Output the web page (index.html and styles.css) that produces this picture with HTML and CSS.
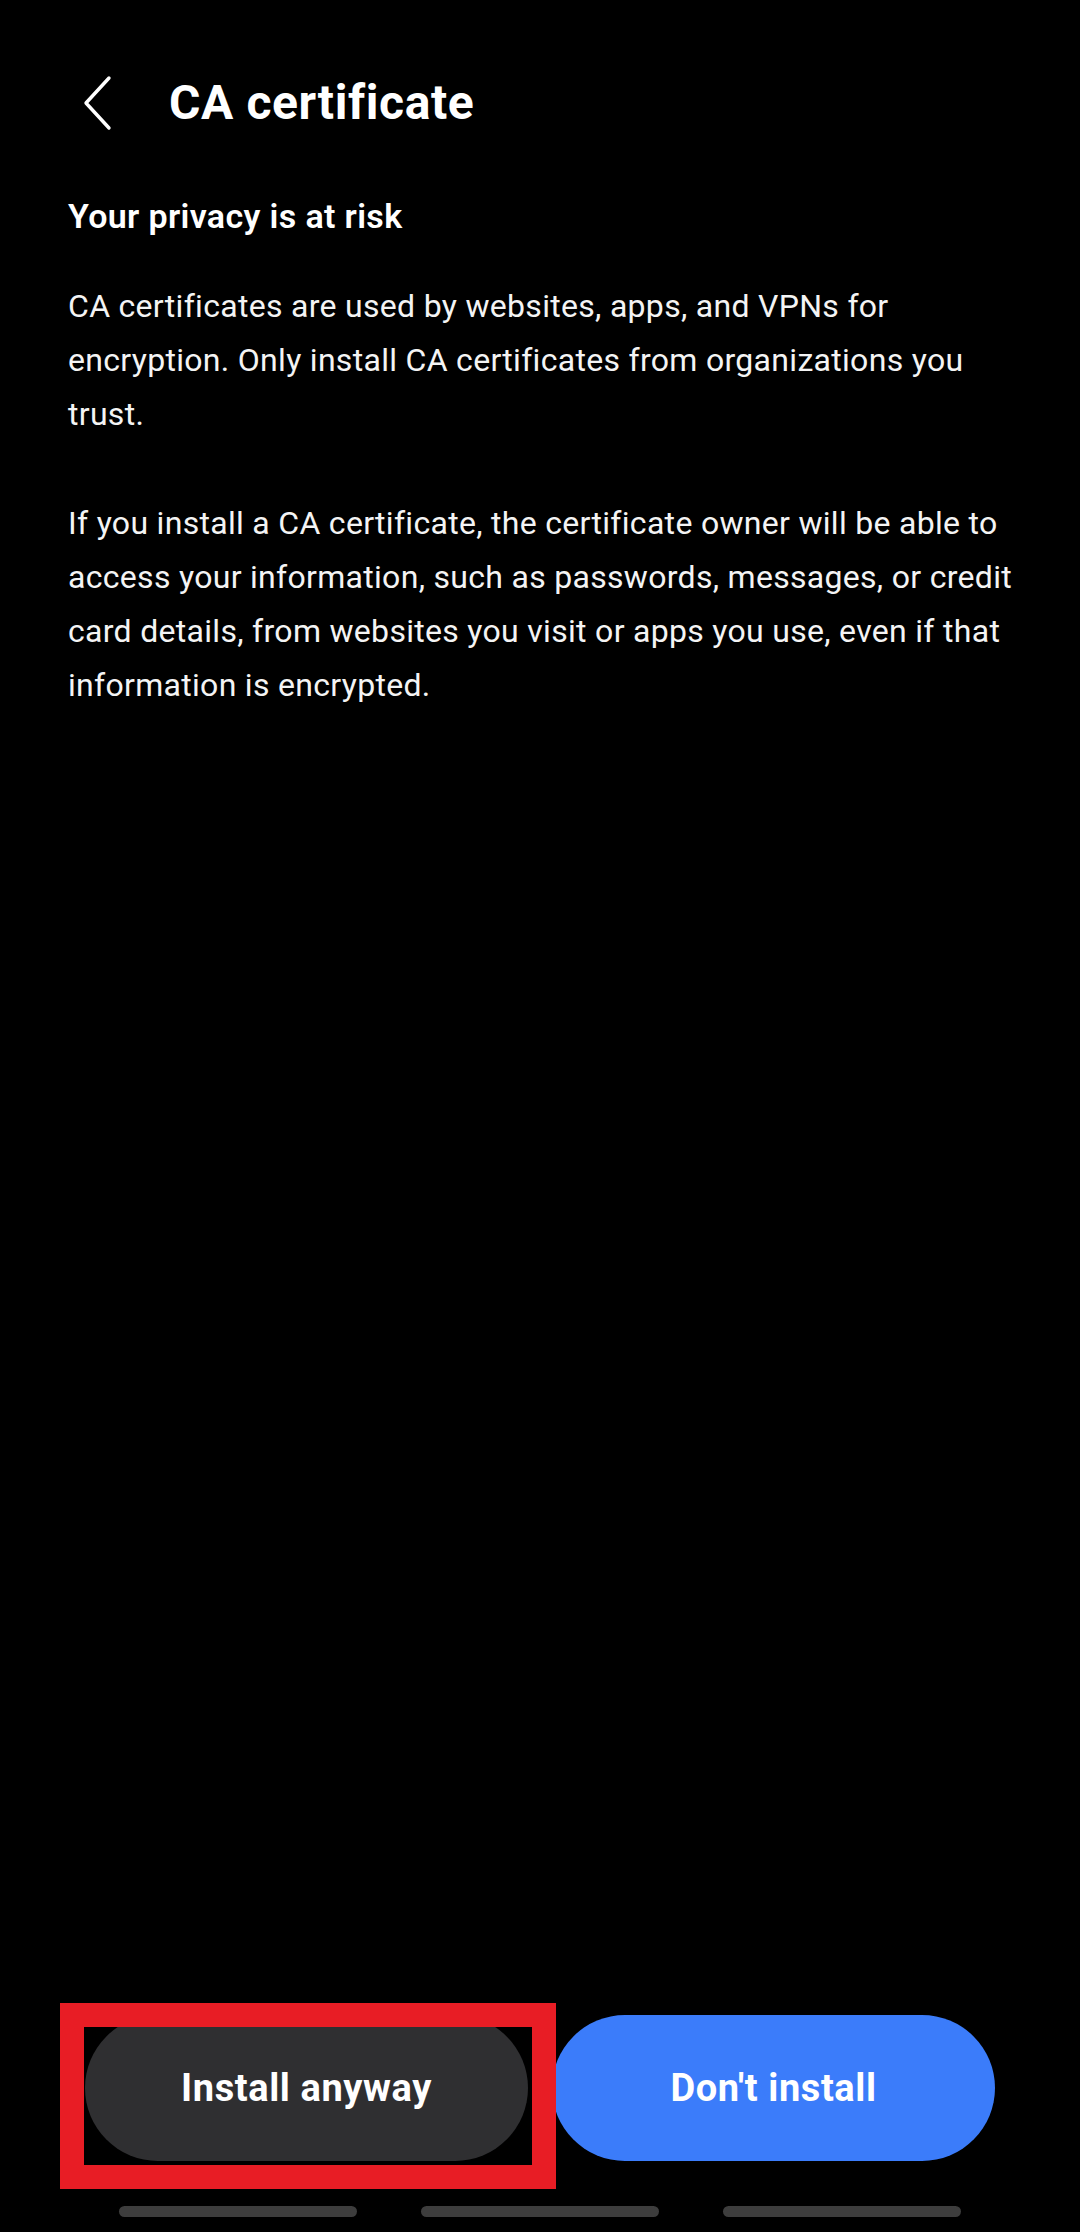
FILE: index.html
```html
<!DOCTYPE html>
<html lang="en">
<head>
<meta charset="utf-8">
<title>CA certificate</title>
<link rel="stylesheet" href="styles.css">
</head>
<body>
<div class="screen">
  <header class="appbar">
    <button class="back" aria-label="Back">
      <svg width="32" height="56" viewBox="0 0 32 56"><path d="M27 3 L4 28 L27 53" fill="none" stroke="#fff" stroke-width="3.4" stroke-linecap="round" stroke-linejoin="round"/></svg>
    </button>
    <h1 class="title">CA certificate</h1>
  </header>
  <main class="content">
    <h2 class="subtitle">Your privacy is at risk</h2>
    <p class="body">CA certificates are used by websites, apps, and VPNs for encryption. Only install CA certificates from organizations you trust.</p>
    <p class="body">If you install a CA certificate, the certificate owner will be able to access your information, such as passwords, messages, or credit card details, from websites you visit or apps you use, even if that information is encrypted.</p>
  </main>
  <div class="actions">
    <button class="btn btn-secondary">Install anyway</button>
    <button class="btn btn-primary">Don't install</button>
    <div class="highlight"></div>
  </div>
  <nav class="navbar">
    <span class="pill"></span>
    <span class="pill"></span>
    <span class="pill"></span>
  </nav>
</div>
</body>
</html>
```
FILE: styles.css
```css
* { box-sizing: border-box; }
html, body {
  margin: 0;
  padding: 0;
  background: #000;
}
body {
  font-family: Roboto, "Liberation Sans", sans-serif;
  color: #fff;
}
.screen {
  width: 1080px;
  height: 2232px;
  display: flex;
  flex-direction: column;
}
.appbar {
  display: flex;
  align-items: center;
  padding: 75px 0 0 82px;
  height: 131px;
}
.back {
  background: none;
  border: 0;
  padding: 0;
  width: 32px;
  height: 56px;
  display: flex;
}
.title {
  margin: 0 0 0 55px;
  font-size: 48px;
  line-height: 56px;
  font-weight: 700;
  letter-spacing: 0.6px;
}
.content {
  flex: 1;
  padding: 65px 68px 0 68px;
}
.subtitle {
  margin: 0 0 43px 0;
  font-size: 34px;
  line-height: 40px;
  font-weight: 600;
  letter-spacing: 0.35px;
}
.body {
  margin: 0 0 54.2px 0;
  font-size: 32px;
  line-height: 54.2px;
  font-weight: 400;
  letter-spacing: 0.3px;
  color: #f4f4f4;
}
.actions {
  position: relative;
  display: flex;
  gap: 24px;
  padding: 0 85px;
  height: 146px;
}
.btn {
  flex: 1;
  height: 146px;
  border: 0;
  border-radius: 73px;
  font-family: Roboto, "Liberation Sans", sans-serif;
  font-size: 38px;
  font-weight: 700;
  letter-spacing: 0.6px;
  color: #fff;
}
.btn-secondary { background: #2f2f31; }
.btn-primary { background: #3b7cfa; }
.highlight {
  position: absolute;
  left: 60px;
  top: -12px;
  width: 496px;
  height: 186px;
  border: 24px solid #e81d25;
  pointer-events: none;
}
.navbar {
  height: 71px;
  display: flex;
  justify-content: center;
  align-items: flex-start;
  gap: 64px;
  padding-top: 45px;
}
.pill {
  width: 238px;
  height: 11px;
  border-radius: 6px;
  background: #3d3d3d;
}
```
